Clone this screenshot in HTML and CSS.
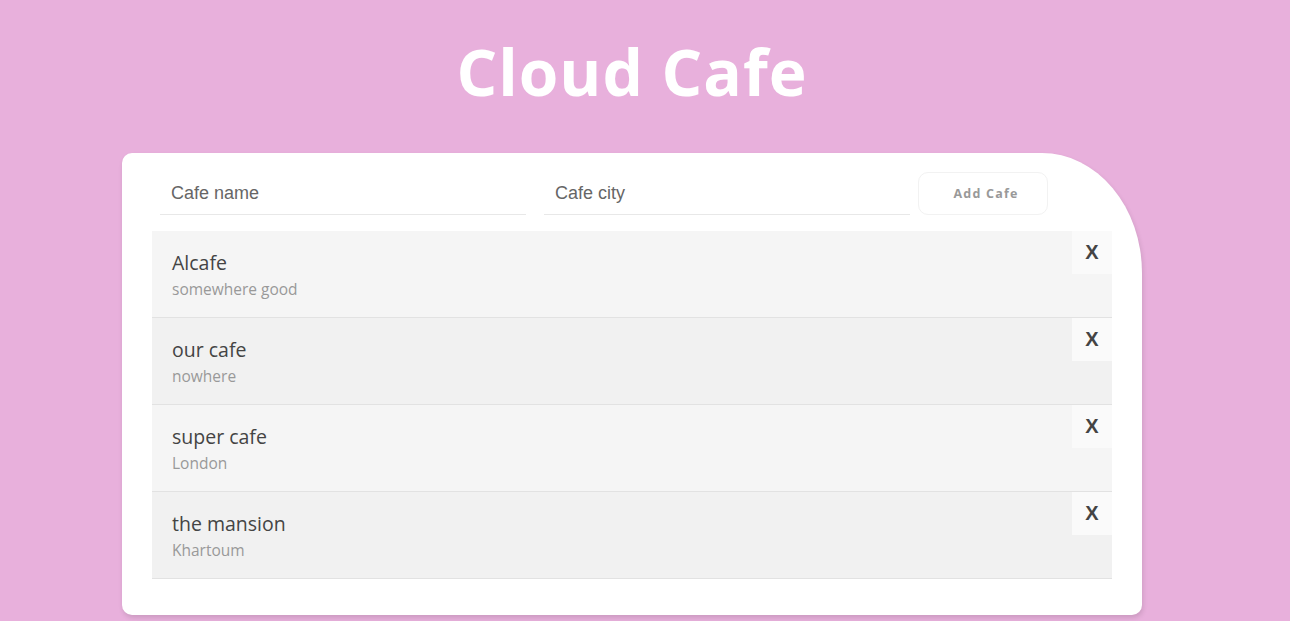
FILE: index.html
```html
<!DOCTYPE html>
<html>
<head>
<meta charset="utf-8">
<link rel="stylesheet" href="styles.css">
</head>
<body>
<div class="page">
  <h1 class="title">Cloud Cafe</h1>
  <div class="card">
    <form class="add-form">
      <input class="field" type="text" placeholder="Cafe name">
      <input class="field" type="text" placeholder="Cafe city">
      <button class="add-btn" type="button">Add Cafe</button>
    </form>
    <ul class="cafe-list">
      <li class="cafe">
        <div class="info"><span class="name">Alcafe</span><span class="city">somewhere good</span></div>
        <div class="del">X</div>
      </li>
      <li class="cafe">
        <div class="info"><span class="name">our cafe</span><span class="city">nowhere</span></div>
        <div class="del">X</div>
      </li>
      <li class="cafe">
        <div class="info"><span class="name">super cafe</span><span class="city">London</span></div>
        <div class="del">X</div>
      </li>
      <li class="cafe">
        <div class="info"><span class="name">the mansion</span><span class="city">Khartoum</span></div>
        <div class="del">X</div>
      </li>
    </ul>
  </div>
</div>
</body>
</html>
```

FILE: styles.css
```css
html, body {
  margin: 0;
  padding: 0;
}
body {
  background: #e8b0dc;
  font-family: "Open Sans", "DejaVu Sans", sans-serif;
  height: 621px;
  overflow: hidden;
}
.page {
  width: 1020px;
  margin: 0 0 0 122px;
}
.title {
  margin: 0;
  padding-top: 28px;
  height: 153px;
  box-sizing: border-box;
  text-align: center;
  color: #fff;
  font-size: 64px;
  line-height: 88px;
  font-weight: 700;
  letter-spacing: 1px;
}
.card {
  background: #fff;
  border-radius: 10px 100px 10px 10px / 10px 120px 10px 10px;
  box-shadow: 1px 3px 5px rgba(0, 0, 0, 0.12);
  padding: 19px 30px 36px 30px;
}
.add-form {
  display: grid;
  grid-template-columns: 366px 366px 130px;
  column-gap: 18px;
  margin: 0 0 16px 8px;
  align-items: end;
}
.field {
  font-family: "Liberation Sans", Arial, sans-serif;
  font-size: 18px;
  color: #555;
  border: none;
  border-bottom: 1px solid #e8e8e8;
  height: 43px;
  padding: 0 11px;
  box-sizing: border-box;
  outline: none;
  background: transparent;
}
.field::placeholder {
  color: #666;
}
.add-btn {
  width: 130px;
  margin-left: -10px;
  height: 43px;
  border: 1px solid #f2f2f2;
  border-radius: 10px;
  background: #fff;
  color: #999;
  font-family: "Open Sans", sans-serif;
  font-weight: 700;
  font-size: 12.5px;
  letter-spacing: 1.2px;
  padding: 0 0 0 6px;
}
.cafe-list {
  list-style: none;
  margin: 0;
  padding: 0;
}
.cafe {
  display: flex;
  justify-content: space-between;
  align-items: flex-start;
  height: 87px;
  box-sizing: border-box;
  border-bottom: 1px solid #e2e2e2;
  background: #f5f5f5;
}
.cafe:nth-child(even) {
  background: #f1f1f1;
}
.info {
  display: flex;
  flex-direction: column;
  padding: 18px 20px 0;
}
.name {
  font-size: 19.5px;
  color: #444;
  line-height: 27px;
}
.city {
  font-size: 15.5px;
  color: #999;
  line-height: 27px;
}
.del {
  width: 40px;
  height: 43px;
  background: #fafafa;
  color: #444;
  font-family: "Liberation Sans", Arial, sans-serif;
  font-weight: 700;
  font-size: 20px;
  display: flex;
  align-items: center;
  justify-content: center;
}
```
